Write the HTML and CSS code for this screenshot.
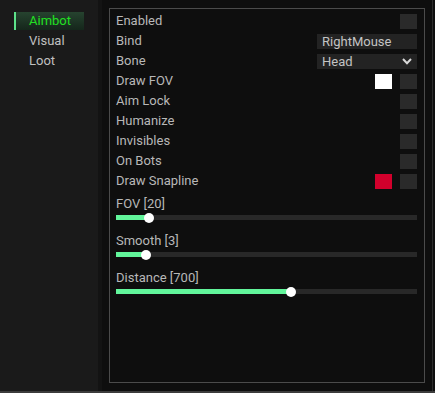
FILE: index.html
```html
<!DOCTYPE html>
<html lang="en">

<head>
    <meta charset="UTF-8">
    <meta name="viewport" content="width=device-width, initial-scale=1.0">
    <title>Menu</title>
    <link rel="stylesheet" href="styles.css">
</head>

<body>
    <div class="window">
        <div class="sidebar">
            <div class="tab active">Aimbot</div>
            <div class="tab">Visual</div>
            <div class="tab">Loot</div>
        </div>
        <div class="divider"></div>
        <div class="main">
            <div class="box">
                <div class="row">
                    <span>Enabled</span>
                    <div class="controls"><div class="check"></div></div>
                </div>
                <div class="row">
                    <span>Bind</span>
                    <div class="controls"><div class="field">RightMouse</div></div>
                </div>
                <div class="row">
                    <span>Bone</span>
                    <div class="controls">
                        <div class="field select">
                            Head
                            <svg width="10" height="7" viewBox="0 0 10 7">
                                <path d="M1 1 L5 5.2 L9 1" fill="none" stroke="#d8d8d8" stroke-width="2"/>
                            </svg>
                        </div>
                    </div>
                </div>
                <div class="row">
                    <span>Draw FOV</span>
                    <div class="controls"><div class="swatch white"></div><div class="check"></div></div>
                </div>
                <div class="row">
                    <span>Aim Lock</span>
                    <div class="controls"><div class="check"></div></div>
                </div>
                <div class="row">
                    <span>Humanize</span>
                    <div class="controls"><div class="check"></div></div>
                </div>
                <div class="row">
                    <span>Invisibles</span>
                    <div class="controls"><div class="check"></div></div>
                </div>
                <div class="row">
                    <span>On Bots</span>
                    <div class="controls"><div class="check"></div></div>
                </div>
                <div class="row">
                    <span>Draw Snapline</span>
                    <div class="controls"><div class="swatch red"></div><div class="check"></div></div>
                </div>

                <div class="sliders">
                    <div class="slider">
                        <div class="slider-label">FOV [20]</div>
                        <div class="track"><div class="fill" style="width: 11%"></div></div>
                    </div>
                    <div class="slider">
                        <div class="slider-label">Smooth [3]</div>
                        <div class="track"><div class="fill" style="width: 10%"></div></div>
                    </div>
                    <div class="slider">
                        <div class="slider-label">Distance [700]</div>
                        <div class="track"><div class="fill" style="width: 58.3%"></div></div>
                    </div>
                </div>
            </div>
        </div>
    </div>
    <div class="bottom-line"></div>
</body>

</html>
```

FILE: styles.css
```css
html, body {
    margin: 0;
    padding: 0;
    background: #0e0e0e;
    font-family: Roboto, "Liberation Sans", sans-serif;
    font-size: 13px;
    color: #b8b8b8;
}

.window {
    display: flex;
    height: 391px;
}

.sidebar {
    width: 98px;
    background: #1a1a1a;
    padding-top: 12px;
    display: flex;
    flex-direction: column;
    gap: 2px;
}

.tab {
    margin-left: 14px;
    width: 55px;
    height: 18px;
    line-height: 18px;
    padding-left: 13px;
    border-left: 2px solid transparent;
    color: #c0c0c0;
}

.tab.active {
    border-left-color: #5de28a;
    color: #22e022;
    background: linear-gradient(to bottom, #26432f, #15261b);
}

.divider {
    width: 4px;
    background: #131313;
}

.main {
    flex: 1;
    padding: 8px 7px 8px 7px;
    border-right: 1px solid #2c2c2c;
    margin-right: 2px;
}

.box {
    height: 100%;
    box-sizing: border-box;
    border: 1px solid #4b4b4b;
    padding: 2px 7px 0 6px;
}

.row {
    height: 20px;
    line-height: 20px;
    display: flex;
    justify-content: space-between;
    align-items: center;
}

.controls {
    display: flex;
    align-items: center;
    gap: 8px;
}

.check {
    width: 17px;
    height: 15px;
    background: #2a2a2a;
}

.swatch {
    width: 17px;
    height: 15px;
}

.swatch.white {
    background: #ffffff;
}

.swatch.red {
    background: #d2002c;
}

.field {
    width: 95px;
    height: 15px;
    line-height: 15px;
    padding-left: 5px;
    background: #232323;
    color: #c4c4c4;
}

.select {
    display: flex;
    justify-content: space-between;
    align-items: center;
}

.select svg {
    margin-right: 5px;
}

.sliders {
    padding-top: 3px;
}

.slider {
    margin-bottom: 11px;
}

.slider-label {
    height: 20px;
    line-height: 20px;
}

.track {
    margin-top: 1px;
    height: 5px;
    background: #282828;
}

.fill {
    position: relative;
    height: 5px;
    background: #62f59b;
}

.fill::after {
    content: "";
    position: absolute;
    right: -5px;
    top: -2.5px;
    width: 10px;
    height: 10px;
    border-radius: 50%;
    background: #ffffff;
}

.bottom-line {
    height: 2px;
    background: #3c3c3c;
}
```
